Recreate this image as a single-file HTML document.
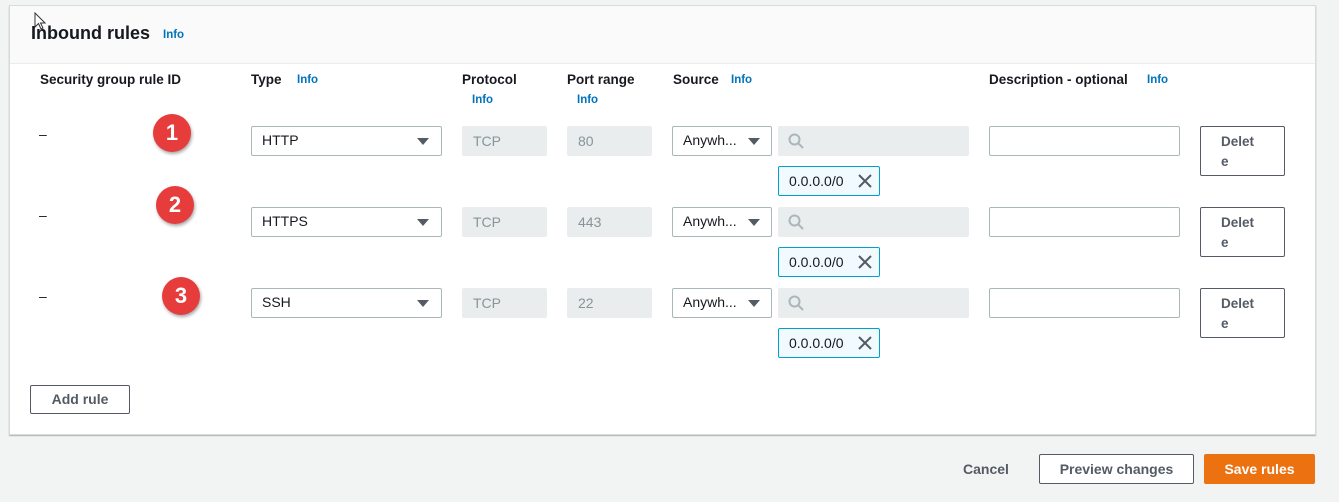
<!DOCTYPE html>
<html><head><style>
body{margin:0;width:1339px;height:502px;background:#f2f3f3;font-family:"Liberation Sans",sans-serif;position:relative;overflow:hidden;color:#16191f}
.a{position:absolute}
.panel{left:9px;top:5px;width:1305px;height:428px;background:#fff;border:1px solid #d5dbdb;box-shadow:0 1px 1px rgba(0,28,36,.3)}
.hdr{left:10px;top:6px;width:1305px;height:57px;background:#fafafa;border-bottom:1px solid #eaeded}
.b{font-weight:bold;font-size:13.5px}
.info{color:#0073bb;font-weight:bold;font-size:11.5px}
.sel{height:28px;border:1px solid #aab7b8;border-radius:2px;background:#fff;font-size:14px;box-sizing:border-box;line-height:27px;padding-left:10px}
.dis{height:30px;background:#eaeded;border-radius:2px;font-size:14px;color:#879596;line-height:30px;padding-left:11px;box-sizing:border-box}
.tri{position:absolute;right:12px;top:11px;width:0;height:0;border-left:6px solid transparent;border-right:6px solid transparent;border-top:7px solid #545b64}
.chip{width:102px;height:30px;border:1px solid #00a1c9;background:#f1faff;box-sizing:border-box;font-size:14px;line-height:28px;padding-left:10px;border-radius:2px}
.del{width:85px;height:50px;border:1px solid #545b64;border-radius:2px;box-sizing:border-box;font-weight:bold;font-size:13.5px;color:#545b64;padding:5px 0 0 20px;line-height:20px}
.num{width:38px;height:38px;border-radius:50%;background:#e63c3c;color:#fff;font-size:22px;font-weight:bold;text-align:center;line-height:38px;box-shadow:1px 2px 3px rgba(0,0,0,.35)}
.btn{height:28px;border:1px solid #545b64;border-radius:2px;box-sizing:border-box;font-weight:bold;font-size:14px;color:#545b64;text-align:center;line-height:26px;background:#fff}
</style></head><body>
<div class="a panel"></div>
<div class="a hdr"></div>
<div class="a" style="left:31px;top:23px;font-size:18px;font-weight:bold">Inbound rules</div>
<div class="a info" style="left:163px;top:29px">Info</div>
<div class="a b" style="left:40px;top:72px">Security group rule ID</div>
<div class="a b" style="left:251px;top:72px">Type</div><div class="a info" style="left:297px;top:74px">Info</div>
<div class="a b" style="left:462px;top:72px">Protocol</div><div class="a info" style="left:472px;top:94px">Info</div>
<div class="a b" style="left:567px;top:72px">Port range</div><div class="a info" style="left:577px;top:94px">Info</div>
<div class="a b" style="left:673px;top:72px">Source</div><div class="a info" style="left:731px;top:74px">Info</div>
<div class="a b" style="left:989px;top:72px">Description - optional</div><div class="a info" style="left:1147px;top:74px">Info</div>

<div class="a" style="left:39px;top:126px;font-size:14px">–</div>
<div class="a" style="left:39px;top:207px;font-size:14px">–</div>
<div class="a" style="left:39px;top:288px;font-size:14px">–</div>

<div class="a num" style="left:153px;top:114px">1</div>
<div class="a num" style="left:156px;top:186px">2</div>
<div class="a num" style="left:162px;top:277px">3</div>

<div class="a sel" style="left:251px;top:126px;width:191px;height:30px">HTTP<div class="tri"></div></div>
<div class="a sel" style="left:251px;top:207px;width:191px;height:30px">HTTPS<div class="tri"></div></div>
<div class="a sel" style="left:251px;top:288px;width:191px;height:30px">SSH<div class="tri"></div></div>

<div class="a dis" style="left:462px;top:126px;width:85px">TCP</div>
<div class="a dis" style="left:462px;top:207px;width:85px">TCP</div>
<div class="a dis" style="left:462px;top:288px;width:85px">TCP</div>
<div class="a dis" style="left:567px;top:126px;width:85px">80</div>
<div class="a dis" style="left:567px;top:207px;width:85px">443</div>
<div class="a dis" style="left:567px;top:288px;width:85px">22</div>

<div class="a sel" style="left:672px;top:126px;width:100px;height:30px">Anywh...<div class="tri" style="right:11px"></div></div>
<div class="a sel" style="left:672px;top:207px;width:100px;height:30px">Anywh...<div class="tri" style="right:11px"></div></div>
<div class="a sel" style="left:672px;top:288px;width:100px;height:30px">Anywh...<div class="tri" style="right:11px"></div></div>

<div class="a dis" style="left:778px;top:126px;width:191px"><svg width="16" height="16" style="position:absolute;left:10px;top:7px" fill="none" stroke="#aab7b8" stroke-width="2"><circle cx="6.5" cy="6.5" r="5"/><path d="M10 10l5 5"/></svg></div>
<div class="a dis" style="left:778px;top:207px;width:191px"><svg width="16" height="16" style="position:absolute;left:10px;top:7px" fill="none" stroke="#aab7b8" stroke-width="2"><circle cx="6.5" cy="6.5" r="5"/><path d="M10 10l5 5"/></svg></div>
<div class="a dis" style="left:778px;top:288px;width:191px"><svg width="16" height="16" style="position:absolute;left:10px;top:7px" fill="none" stroke="#aab7b8" stroke-width="2"><circle cx="6.5" cy="6.5" r="5"/><path d="M10 10l5 5"/></svg></div>

<div class="a chip" style="left:778px;top:166px">0.0.0.0/0<svg width="14" height="14" style="position:absolute;left:79px;top:7px" stroke="#545b64" stroke-width="2"><path d="M1 1l12 12M13 1L1 13"/></svg></div>
<div class="a chip" style="left:778px;top:247px">0.0.0.0/0<svg width="14" height="14" style="position:absolute;left:79px;top:7px" stroke="#545b64" stroke-width="2"><path d="M1 1l12 12M13 1L1 13"/></svg></div>
<div class="a chip" style="left:778px;top:328px">0.0.0.0/0<svg width="14" height="14" style="position:absolute;left:79px;top:7px" stroke="#545b64" stroke-width="2"><path d="M1 1l12 12M13 1L1 13"/></svg></div>

<div class="a sel" style="left:989px;top:126px;width:191px;height:30px"></div>
<div class="a sel" style="left:989px;top:207px;width:191px;height:30px"></div>
<div class="a sel" style="left:989px;top:288px;width:191px;height:30px"></div>

<div class="a del" style="left:1200px;top:126px">Delet<br>e</div>
<div class="a del" style="left:1200px;top:207px">Delet<br>e</div>
<div class="a del" style="left:1200px;top:288px">Delet<br>e</div>

<div class="a btn" style="left:30px;top:385px;width:100px;height:29px">Add rule</div>

<div class="a b" style="left:963px;top:461px;color:#545b64;font-size:14px">Cancel</div>
<div class="a btn" style="left:1039px;top:454px;width:155px;height:30px;line-height:28px">Preview changes</div>
<div class="a btn" style="left:1204px;top:454px;width:111px;height:30px;line-height:30px;background:#ec7211;border:none;color:#fff">Save rules</div>

<svg class="a" style="left:34px;top:12px" width="12" height="18"><path d="M1 1v14l3.5-3.5 2.5 5.5 2-1-2.5-5h4.5z" fill="#fff" stroke="#333" stroke-width="1"/></svg>
</body></html>
